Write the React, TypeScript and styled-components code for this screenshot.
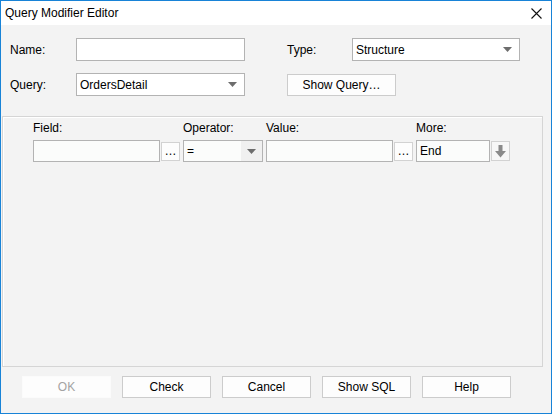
import { FC } from "react";
import styled, { createGlobalStyle } from "styled-components";

const GlobalStyle = createGlobalStyle`
  html, body {
    margin: 0;
    padding: 0;
    background: #ffffff;
  }
  * {
    box-sizing: border-box;
  }
`;

const Window = styled.div`
  width: 552px;
  height: 414px;
  border: 1px solid #1883d7;
  display: flex;
  flex-direction: column;
  font-family: "Liberation Sans", Arial, sans-serif;
  font-size: 12px;
  color: #000;
  background: #f3f3f3;
`;

const TitleBar = styled.div`
  height: 24px;
  background: #fff;
  display: flex;
  align-items: center;
  justify-content: space-between;
  padding: 0 9px 0 4px;
  font-size: 12px;
`;

const CloseIcon = styled.svg`
  width: 11px;
  height: 11px;
`;

const Body = styled.div`
  flex: 1;
  display: flex;
  flex-direction: column;
`;

const TopForm = styled.div`
  display: grid;
  grid-template-columns: 66px 169px 42px 65px 168px;
  grid-template-rows: 23px 23px;
  row-gap: 12px;
  align-items: center;
  padding: 13px 0 0 9px;
`;

const Label = styled.span`
  white-space: nowrap;
`;

const TextBox = styled.div<{ $w?: number; $h?: number; $bg?: string }>`
  width: ${({ $w }) => ($w ? `${$w}px` : "100%")};
  height: ${({ $h }) => $h ?? 23}px;
  border: 1px solid #b3b3b3;
  background: ${({ $bg }) => $bg ?? "#fff"};
  display: flex;
  align-items: center;
  padding-left: 3px;
  overflow: hidden;
  white-space: nowrap;
`;

const Select = styled.div<{ $w?: number; $h?: number; $bg?: string }>`
  width: ${({ $w }) => ($w ? `${$w}px` : "100%")};
  height: ${({ $h }) => $h ?? 23}px;
  border: 1px solid #b3b3b3;
  background: ${({ $bg }) => $bg ?? "#fff"};
  display: flex;
  align-items: stretch;
`;

const SelectText = styled.div`
  flex: 1;
  display: flex;
  align-items: center;
  padding-left: 3px;
`;

const SelectArrow = styled.div<{ $shade?: boolean }>`
  width: 21px;
  display: flex;
  align-items: center;
  justify-content: center;
  background: ${({ $shade }) => ($shade ? "#f0f0f0" : "transparent")};
  padding-right: ${({ $shade }) => ($shade ? 0 : 3)}px;
`;

const Caret: FC = () => (
  <svg width="9" height="5" viewBox="0 0 9 5">
    <polygon points="0,0 9,0 4.5,5" fill="#6d6d6d" />
  </svg>
);

const Button = styled.div<{ $w: number; $h?: number; $disabled?: boolean }>`
  width: ${({ $w }) => $w}px;
  height: ${({ $h }) => $h ?? 22}px;
  border: 1px solid ${({ $disabled }) => ($disabled ? "#fbfbfb" : "#cccccc")};
  background: #fdfdfd;
  color: ${({ $disabled }) => ($disabled ? "#a3a3a3" : "#000")};
  display: flex;
  align-items: center;
  justify-content: center;
  white-space: nowrap;
`;

const Panel = styled.div`
  margin: 20px 8px 0 1px;
  height: 251px;
  border: 1px solid #d5d5d5;
  box-shadow: inset 1px 1px 0 #ffffff;
  padding: 3px 0 0 30px;
`;

const HeaderRow = styled.div`
  display: flex;
  height: 16px;
  align-items: center;
  margin-bottom: 4px;
`;

const HeaderCell = styled.span<{ $w: number }>`
  width: ${({ $w }) => $w}px;
  flex-shrink: 0;
`;

const FieldRow = styled.div`
  display: flex;
  align-items: center;
  height: 22px;
`;

const Gap = styled.div<{ $w: number }>`
  width: ${({ $w }) => $w}px;
  flex-shrink: 0;
`;

const SmallButton = styled.div`
  width: 19px;
  height: 19px;
  border: 1px solid #d2d2d2;
  background: #fdfdfd;
  display: flex;
  align-items: flex-end;
  justify-content: center;
  padding-bottom: 3px;
  font-size: 12px;
  color: #000;
  line-height: 1;
`;

const ArrowButton = styled.div`
  width: 19px;
  height: 20px;
  border: 1px solid #d2d2d2;
  background: #f7f7f7;
  display: flex;
  align-items: center;
  justify-content: center;
`;

const Footer = styled.div`
  display: flex;
  gap: 11px;
  padding: 9px 0 0 21px;
`;

const App: FC = () => {
  return (
    <>
      <GlobalStyle />
      <Window>
        <TitleBar>
          <span>Query Modifier Editor</span>
          <CloseIcon viewBox="0 0 11 11">
            <path d="M0.5 0.5 L10.5 10.5 M10.5 0.5 L0.5 10.5" stroke="#111" strokeWidth="1.1" />
          </CloseIcon>
        </TitleBar>
        <Body>
          <TopForm>
            <Label>Name:</Label>
            <TextBox />
            <span />
            <Label>Type:</Label>
            <Select>
              <SelectText>Structure</SelectText>
              <SelectArrow>
                <Caret />
              </SelectArrow>
            </Select>

            <Label>Query:</Label>
            <Select>
              <SelectText>OrdersDetail</SelectText>
              <SelectArrow>
                <Caret />
              </SelectArrow>
            </Select>
            <span />
            <Button $w={109}>Show Query…</Button>
            <span />
          </TopForm>

          <Panel>
            <HeaderRow>
              <HeaderCell $w={150}>Field:</HeaderCell>
              <HeaderCell $w={83}>Operator:</HeaderCell>
              <HeaderCell $w={150}>Value:</HeaderCell>
              <HeaderCell $w={80}>More:</HeaderCell>
            </HeaderRow>
            <FieldRow>
              <TextBox $w={127} $h={22} $bg="#fbfcfb" />
              <Gap $w={1} />
              <SmallButton>…</SmallButton>
              <Gap $w={3} />
              <Select $w={80} $h={22} $bg="#fbfcfb">
                <SelectText>=</SelectText>
                <SelectArrow $shade>
                  <Caret />
                </SelectArrow>
              </Select>
              <Gap $w={3} />
              <TextBox $w={127} $h={22} $bg="#fbfcfb" />
              <Gap $w={1} />
              <SmallButton>…</SmallButton>
              <Gap $w={3} />
              <TextBox $w={74} $h={22} $bg="#fbfcfb">End</TextBox>
              <Gap $w={1} />
              <ArrowButton>
                <svg width="11" height="13" viewBox="0 0 11 13">
                  <rect x="3.5" y="0" width="4" height="7" fill="#8a8a8a" />
                  <polygon points="0,6 11,6 5.5,12.5" fill="#8a8a8a" />
                </svg>
              </ArrowButton>
            </FieldRow>
          </Panel>

          <Footer>
            <Button $w={89} $disabled>
              OK
            </Button>
            <Button $w={89}>Check</Button>
            <Button $w={89}>Cancel</Button>
            <Button $w={89}>Show SQL</Button>
            <Button $w={89}>Help</Button>
          </Footer>
        </Body>
      </Window>
    </>
  );
};

export default App;
